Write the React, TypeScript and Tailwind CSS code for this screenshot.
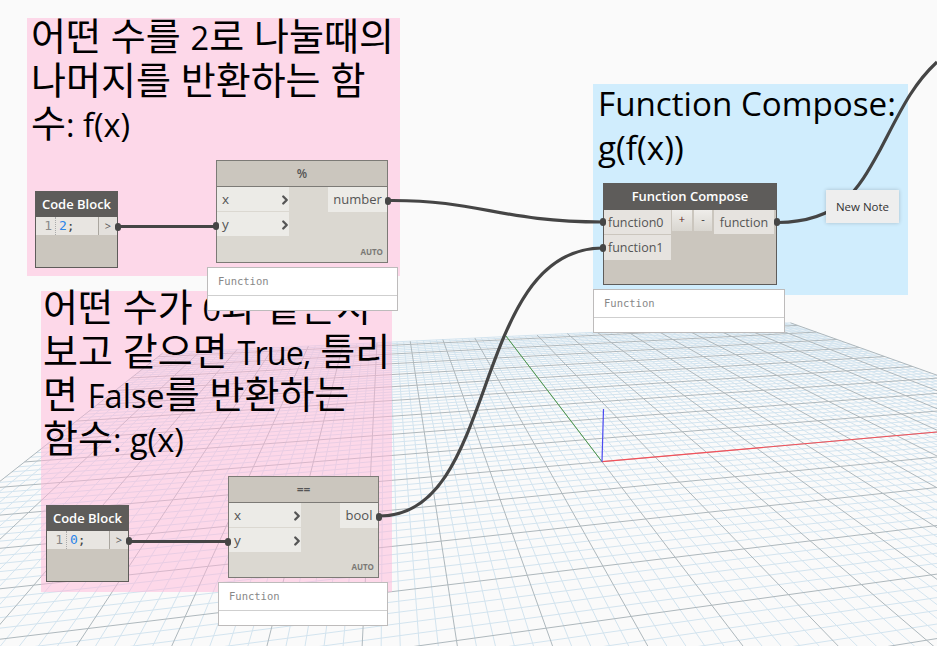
import { ChevronRight } from 'lucide-react'
import type { ReactNode } from 'react'

const sans = "font-['Open_Sans','Noto_Sans_CJK_KR',sans-serif]"

// floor grid is a projective map of the origin and two vanishing points
const O = [602, 461.7]
const VX = [3800, 178]
const VY = [385, 178]

function project(u: number, v: number) {
  const w = 1 + u + v
  return [(O[0] + u * VX[0] + v * VY[0]) / w, (O[1] + u * VX[1] + v * VY[1]) / w]
}

const U_STEP = 0.00338
const V_STEP = 0.0168
const U_CELLS = 50
const V_NEAR = -40
const V_FAR = 47

function gridLine(key: string, a: number[], b: number[], major: boolean) {
  return (
    <line
      key={key}
      x1={a[0]}
      y1={a[1]}
      x2={b[0]}
      y2={b[1]}
      stroke={major ? '#aeb8bd' : '#d3e4ef'}
      strokeWidth={1}
    />
  )
}

function Floor() {
  const minor = []
  const major = []
  for (let i = -U_CELLS; i <= U_CELLS; i++) {
    const isMajor = i % 5 === 0
    const line = gridLine(
      `u${i}`,
      project(i * U_STEP, V_NEAR * V_STEP),
      project(i * U_STEP, V_FAR * V_STEP),
      isMajor,
    )
    if (isMajor) major.push(line)
    else minor.push(line)
  }
  for (let j = V_NEAR; j <= V_FAR; j++) {
    const isMajor = j % 5 === 0
    const line = gridLine(
      `v${j}`,
      project(-U_CELLS * U_STEP, j * V_STEP),
      project(U_CELLS * U_STEP, j * V_STEP),
      isMajor,
    )
    if (isMajor) major.push(line)
    else minor.push(line)
  }
  return (
    <svg className="absolute inset-0" width={937} height={646}>
      {minor}
      {major}
      <line x1={506} y1={336} x2={602} y2={461.7} stroke="#4d9a4d" strokeWidth={1} />
      <line x1={602} y1={461.7} x2={937} y2={432} stroke="#f4515a" strokeWidth={1.2} />
      <line x1={602} y1={461.7} x2={603.5} y2={409} stroke="#4a4af0" strokeWidth={1.2} />
    </svg>
  )
}

function Wires() {
  return (
    <svg className="absolute inset-0" width={937} height={646} fill="none" stroke="#454545" strokeWidth={3.2}>
      <path d="M120 226.5H216" />
      <path d="M131 541.5H228" />
      <path d="M390 200.5C480 200 500 222 603 222" />
      <path d="M380 516C500 516 470 248 603 248" />
      <path d="M778 222.5C840 222 858 190 880 150C900 112 912 85 937 62" />
    </svg>
  )
}

// Hangul runs larger than the Latin next to it, as in the reference's font pairing
function Note({ className, lines }: { className: string; lines: ReactNode[] }) {
  return (
    <div className={`absolute whitespace-nowrap ${sans} text-[38px] leading-[43.5px] text-black ${className}`}>
      {lines.map((line, i) => (
        <div key={i} className="h-[43.5px]">
          {line}
        </div>
      ))}
    </div>
  )
}

function Latin({ children }: { children: ReactNode }) {
  return <span className="text-[32.5px]">{children}</span>
}

function Port({ className }: { className: string }) {
  return <div className={`absolute w-[6px] h-[8px] rounded-[3px] bg-[#454545] ${className}`} />
}

function CodeBlock({ value, className }: { value: string; className: string }) {
  return (
    <div className={`absolute w-[83px] h-[77px] border border-[#5e5c5a] bg-[#cbc6be] ${sans} ${className}`}>
      <div className="h-[25px] bg-[#5e5c5a] text-white text-[13px] font-semibold flex items-center justify-center">
        Code Block
      </div>
      <div className="h-[18px] flex bg-[#e8e5e1]">
        <span className="w-[20px] text-right pr-[3px] text-[13px] leading-[18px] text-[#8a8a8a] font-['DejaVu_Sans_Mono',monospace] border-r border-dotted border-[#aaaaaa]">
          1
        </span>
        <span className="flex-1 pl-[3px] text-[13px] leading-[18px] font-['DejaVu_Sans_Mono',monospace] text-[#444444]">
          <span className="text-[#2a84e8]">{value}</span>;
        </span>
        <span className="w-[19px] border-l border-[#aaa69f] bg-[#e3e0dc] text-center text-[11px] leading-[17px] text-[#555555]">
          &gt;
        </span>
      </div>
      <Port className="-right-[4px] top-[31px]" />
    </div>
  )
}

function InputRow({ label }: { label: string }) {
  return (
    <div className="h-[24px] w-[72px] mb-[1px] bg-[#ecebe7] flex items-center justify-between text-[13.5px] text-[#555555] pl-[5px] pt-[1px]">
      {label}
      <ChevronRight size={14} strokeWidth={4} className="text-[#555555] -mr-[3px]" />
    </div>
  )
}

function OpNode({
  title,
  output,
  outWidth,
  className,
}: {
  title: string
  output: string
  outWidth: string
  className: string
}) {
  return (
    <div className={`absolute border border-[#7c7a76] bg-[#dbd8d1] ${sans} ${className}`}>
      <div className="h-[26px] bg-[#cbc6be] border-b border-[#7c7a76] flex items-center justify-center text-[12px] font-semibold text-[#555555]">
        {title}
      </div>
      <div className="flex justify-between">
        <div>
          <InputRow label="x" />
          <InputRow label="y" />
        </div>
        <div className={`h-[25px] bg-[#ecebe7] flex items-center justify-center pt-[1px] text-[13px] text-[#555555] ${outWidth}`}>
          {output}
        </div>
      </div>
      <span className="absolute right-[4px] bottom-[5px] text-[8px] leading-[10px] font-bold text-[#7a7875]">AUTO</span>
      <Port className="-right-[4px] top-[36px]" />
      <Port className="-left-[4px] top-[61px]" />
    </div>
  )
}

function Preview({ className }: { className: string }) {
  return (
    <div className={`absolute border border-[#bdbbbb] bg-white ${className}`}>
      <div className="h-[28px] border-b border-[#cfcfcf] pl-[10px] text-[10.5px] leading-[26px] text-[#888888] font-['DejaVu_Sans_Mono',monospace]">
        Function
      </div>
    </div>
  )
}

function ComposeNode() {
  return (
    <div className={`absolute left-[603px] top-[183px] w-[174px] h-[102px] border border-[#5e5c5a] bg-[#cbc6be] ${sans}`}>
      <div className="h-[26px] bg-[#5e5c5a] text-white text-[13px] font-semibold flex items-center justify-center">
        Function Compose
      </div>
      <div className="flex">
        <div>
          <div className="h-[24px] w-[67px] mb-[1px] bg-[#e6e3df] text-[12.5px] leading-[25px] text-[#555555] pl-[4px]">function0</div>
          <div className="h-[25px] w-[67px] bg-[#e6e3df] text-[12.5px] leading-[26px] text-[#555555] pl-[4px]">function1</div>
        </div>
        <div className="ml-[1px] w-[20px] h-[21px] bg-gradient-to-b from-[#efedea] to-[#d9d6d0] text-center text-[11px] leading-[18px] text-[#5a2020]">+</div>
        <div className="ml-[2px] w-[18px] h-[21px] bg-gradient-to-b from-[#efedea] to-[#d9d6d0] text-center text-[11px] leading-[18px] text-[#333333]">-</div>
        <div className="ml-[2px] w-[60px] h-[24px] bg-[#e6e3df] text-[12.5px] leading-[25px] text-center text-[#555555]">function</div>
      </div>
      <Port className="-left-[4px] top-[34px]" />
      <Port className="-left-[4px] top-[60px]" />
      <Port className="-right-[4px] top-[34px]" />
    </div>
  )
}

export default function App() {
  return (
    <div className="relative w-[937px] h-[646px] overflow-hidden bg-[#fafafa]">
      <Floor />

      <div className="absolute left-[27px] top-[18px] w-[373px] h-[258px] bg-[#ffb6d9]/50" />
      <div className="absolute left-[41px] top-[291px] w-[351px] h-[301px] bg-[#ffb6d9]/50" />
      <div className="absolute left-[593px] top-[84px] w-[315px] h-[211px] bg-[#a6dfff]/50" />

      <Note
        className="left-[31px] top-[14px]"
        lines={[
          <>어떤 수를 <Latin>2</Latin>로 나눌때의</>,
          <>나머지를 반환하는 함</>,
          <>수<Latin>: f(x)</Latin></>,
        ]}
      />
      <Note
        className="left-[43px] top-[285px]"
        lines={[
          <>어떤 수가 <Latin>0</Latin>과 같은지</>,
          <>보고 같으면 <span className="text-[32.5px] tracking-[-1px]">True,</span> 틀리</>,
          <>면 <Latin>False</Latin>를 반환하는</>,
          <>함수<Latin>: g(x)</Latin></>,
        ]}
      />
      <Note
        className="left-[598px] top-[80px]"
        lines={[
          <span className="text-[33.2px]">Function Compose:</span>,
          <span className="text-[33.2px]">g(f(x))</span>,
        ]}
      />

      <Wires />

      <CodeBlock value="2" className="left-[35px] top-[191px]" />
      <OpNode title="%" output="number" outWidth="w-[59px]" className="left-[216px] top-[160px] w-[172px] h-[103px]" />
      <Preview className="left-[207px] top-[267px] w-[191px] h-[44px]" />

      <CodeBlock value="0" className="left-[46px] top-[505px]" />
      <OpNode title="==" output="bool" outWidth="w-[38px]" className="left-[228px] top-[476px] w-[151px] h-[102px]" />
      <Preview className="left-[218px] top-[582px] w-[170px] h-[44px]" />

      <ComposeNode />
      <Preview className="left-[593px] top-[289px] w-[192px] h-[44px]" />

      <div className={`absolute left-[826px] top-[190px] w-[73px] h-[33px] bg-[#eeeeee] shadow-[0_0_4px_rgba(0,0,0,0.2)] flex items-center justify-center text-[11.5px] text-[#333333] ${sans}`}>
        New Note
      </div>
    </div>
  )
}
